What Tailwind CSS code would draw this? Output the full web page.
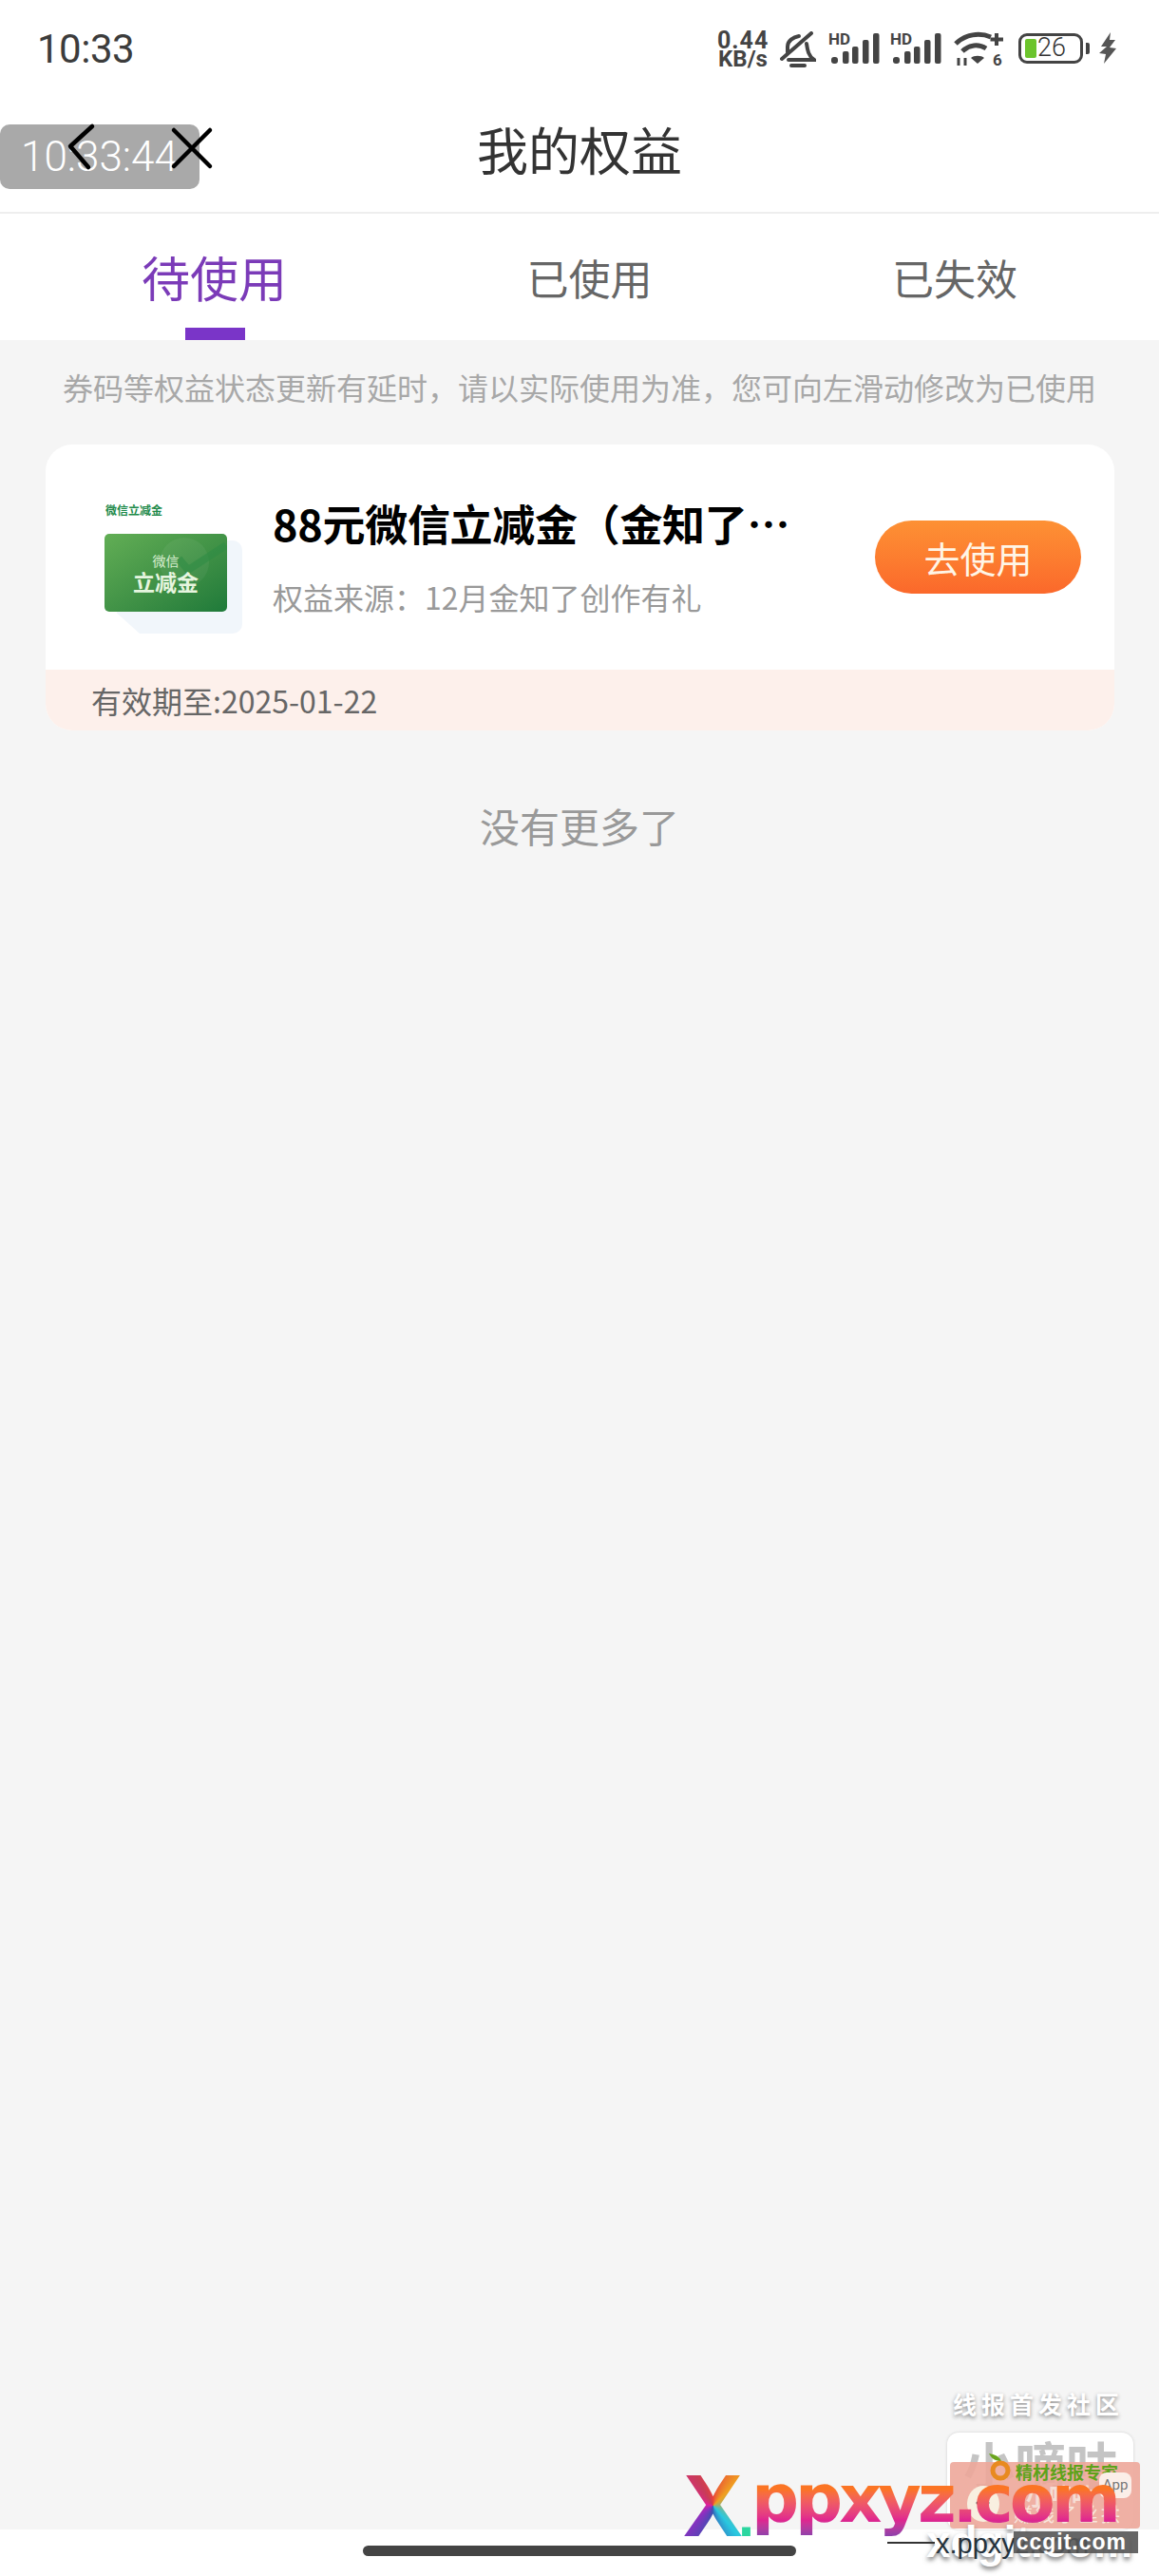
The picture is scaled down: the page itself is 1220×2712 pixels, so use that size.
<!DOCTYPE html>
<html lang="zh-CN">
<head>
  <meta charset="UTF-8" />
  <meta name="viewport" content="width=device-width, initial-scale=1" />
  <title>我的权益</title>
  <script src="https://cdn.jsdelivr.net/npm/@tailwindcss/browser@4"></script>
</head>
<body class="bg-[#f5f5f5] font-['Noto_Sans_CJK_SC','Noto_Sans',sans-serif]">
  <div class="relative w-[1220px] h-[2712px] overflow-hidden flex flex-col">

    <!-- status bar -->
    <div class="bg-white h-[105px] pt-[28px] pl-[39px] pr-[45px] flex items-start justify-between">
      <span class="font-['Roboto',sans-serif] text-[42px] leading-[48px] tracking-[-0.5px] text-[#3c3c3c]">10:33</span>
      <div class="flex items-start pt-[5px] text-[#444]">
        <div class="w-[54px] font-['Roboto',sans-serif] font-bold text-center">
          <div class="text-[25px] leading-[20px] tracking-[1px]">0.44</div>
          <div class="text-[24px] leading-[19px]">KB/s</div>
        </div>
        <svg class="ml-[12px]" width="38" height="40" viewBox="0 0 38 40" fill="none" stroke="currentColor" stroke-width="4" stroke-linecap="round"><path d="M2 29 L33 2" /><path d="M8 22 V16 C8 10 14 6 20 5" /><path d="M28 13 C29 20 30 26 36 30 H9" /><path d="M12 36 H26" stroke-width="4" /></svg>
        <svg class="ml-[13px] mt-[1px]" width="54" height="36" viewBox="0 0 54 36" fill="currentColor"><text x="0" y="13" font-family="Roboto" font-weight="700" font-size="17">HD</text><rect x="3" y="26" width="7" height="7" rx="3" /><rect x="15" y="20" width="6.5" height="13" rx="2" /><rect x="25" y="15" width="6.5" height="18" rx="2" /><rect x="36" y="8" width="6.5" height="25" rx="2" /><rect x="47" y="1" width="6.5" height="32" rx="2" /></svg>
        <svg class="ml-[11px] mt-[1px]" width="54" height="36" viewBox="0 0 54 36" fill="currentColor"><text x="0" y="13" font-family="Roboto" font-weight="700" font-size="17">HD</text><rect x="3" y="26" width="7" height="7" rx="3" /><rect x="15" y="20" width="6.5" height="13" rx="2" /><rect x="25" y="15" width="6.5" height="18" rx="2" /><rect x="36" y="8" width="6.5" height="25" rx="2" /><rect x="47" y="1" width="6.5" height="32" rx="2" /></svg>
        <svg class="ml-[13px]" width="54" height="38" viewBox="0 0 54 38" fill="none" stroke="currentColor" stroke-width="5"><path d="M2 13 C12 3 27 1 39 6" /><path d="M9 21 C16 14 26 13 34 18" /><path d="M25 34 L18 28 C21 25 29 25 32 28 Z" fill="currentColor" stroke="none" /><path d="M45 2 V15 M38.500 8.500 H52" stroke-width="4" /><text x="41" y="36" font-family="Roboto" font-weight="700" font-size="17" fill="currentColor" stroke="none">6</text><path d="M5 28 V36 M12 28 V36" stroke-width="3" /></svg>
        <div class="ml-[14px] mt-[1px] flex items-center">
          <div class="relative w-[68px] h-[32px] rounded-[9px] border-[3px] border-[#444] flex items-center overflow-hidden">
            <div class="absolute left-[4px] top-[3px] bottom-[3px] w-[12px] rounded-[2px] bg-[#6cc42c]"></div>
            <span class="relative ml-[17px] font-['Roboto',sans-serif] font-light text-[27px] leading-none text-[#333]">26</span>
          </div>
          <div class="ml-[3px] w-[4px] h-[12px] rounded-r-[2px] bg-[#444]"></div>
          <svg class="ml-[10px]" width="18" height="33" viewBox="0 0 18 33" fill="#555"><path d="M12 0 L2 15 L8 15 L0 22 L7 23 L5 33 L18 17 L11 16 L17 8 L11 8 Z" /></svg>
        </div>
      </div>
    </div>

    <!-- nav bar -->
    <div class="bg-white h-[120px] border-b-2 border-[#eeeeee] flex items-center justify-center pb-[14px]">
      <h1 class="text-[54px] leading-none text-[#333]">我的权益</h1>
    </div>

    <!-- tabs -->
    <div class="bg-white h-[133px] pl-[149px] pr-[149px] flex items-center justify-between">
      <div class="relative h-full flex items-center text-[51px] leading-none text-[#7b3bb8]">
        待使用
        <div class="absolute bottom-0 left-[46px] w-[63px] h-[13px] bg-[#7a35c8]"></div>
      </div>
      <div class="text-[44px] leading-none text-[#666]">已使用</div>
      <div class="text-[44px] leading-none text-[#666]">已失效</div>
    </div>

    <p class="mt-[29px] text-center text-[32px] leading-[40px] text-[#a8a8a8]">券码等权益状态更新有延时，请以实际使用为准，您可向左滑动修改为已使用</p>

    <!-- coupon card -->
    <div class="mt-[41px] ml-[48px] w-[1125px] rounded-[28px] overflow-hidden bg-white">
      <div class="h-[237px] flex items-center pl-[63px]">
        <div class="relative w-[144px] h-[138px] self-start mt-[61px] shrink-0">
          <div class="absolute left-[12px] top-[40px] w-[132px] h-[98px] rounded-[10px] bg-[#f1f6fb] [clip-path:polygon(0_0,100%_0,100%_100%,24px_100%,0_78%)]"></div>
          <div class="absolute left-0 top-0 text-[12px] leading-[16px] font-bold text-[#1d8a4a] whitespace-nowrap">微信立减金</div>
          <div class="absolute -left-[1px] top-[33px] w-[129px] h-[82px] rounded-[5px] bg-gradient-to-br from-[#62ae55] to-[#1e7a3a] flex flex-col items-center justify-center overflow-hidden">
            <svg class="absolute left-0 top-0" width="129" height="82" viewBox="0 0 129 82" fill="none"><circle cx="84" cy="30" r="26" fill="#ffffff" fill-opacity="0.05" /><path d="M78 26 L88 38 L128 12" stroke="#2f8c45" stroke-opacity="0.6" stroke-width="8" /></svg>
            <span class="relative text-[14px] leading-[18px] text-[#d8eed0]">微信</span>
            <span class="relative text-[23px] leading-[26px] font-bold text-[#e6f5df]">立减金</span>
          </div>
        </div>
        <div class="ml-[32px] w-[600px] -mt-[4px]">
          <h2 class="text-[45px] leading-[60px] tracking-[-0.3px] font-bold text-black whitespace-nowrap">88元微信立减金（金知了…</h2>
          <p class="mt-[27px] text-[32px] leading-[40px] text-[#999] whitespace-nowrap">权益来源：12月金知了创作有礼</p>
        </div>
        <button class="ml-auto mr-[35px] w-[217px] h-[77px] rounded-full bg-gradient-to-b from-[#fd9134] to-[#fb682b] text-[38px] leading-none text-[#fff5e6]">去使用</button>
      </div>
      <div class="h-[64px] bg-[#fdf0eb] pl-[48px] flex items-center text-[32px] text-[#666]">有效期至:2025-01-22</div>
    </div>

    <p class="mt-[73px] text-center text-[42px] leading-[54px] text-[#999]">没有更多了</p>

    <!-- home indicator -->
    <div class="mt-auto h-[49px] bg-white flex justify-center pt-[17px]">
      <div class="w-[456px] h-[11px] rounded-full bg-[#444]"></div>
    </div>

    <!-- screenshot timestamp toast -->
    <div class="absolute left-0 top-[131px] w-[210px] h-[68px] rounded-[10px] bg-[#a9a9a9] flex items-center pl-[22px] font-['Roboto',sans-serif] font-light text-[44px] text-white">10:33:44</div>
    <svg class="absolute left-[70px] top-[128px]" width="155" height="52" viewBox="70 128 155 52" fill="none" stroke="#000" stroke-width="4.5" stroke-linecap="round" stroke-linejoin="round">
      <path d="M97 133 L74 154 L93 176" />
      <path d="M183 137 L221 175 M221 137 L183 175" />
    </svg>

    <!-- watermark: community label and app card -->
    <div class="absolute left-[1003px] top-[2514px] text-[25px] leading-[32px] tracking-[5px] font-bold text-white whitespace-nowrap [text-shadow:0_2px_4px_#888]">线报首发社区</div>
    <div class="absolute left-[997px] top-[2561px] w-[196px] h-[102px] rounded-[12px] bg-white shadow-[0_0_3px_#ccc] text-center text-[54px] leading-[66px] font-bold text-[#c4c4c4]">小嘀咕</div>
    <div class="absolute left-[1000px] top-[2592px] w-[200px] h-[70px] rounded-[4px] bg-[#eda79a]/90">
      <div class="absolute left-[80px] top-[20px] text-[24px] leading-[30px] font-bold text-[#f6ddd4] whitespace-nowrap">小嘀咕</div>
      <svg class="absolute left-[40px] top-[-9px]" width="24" height="30" viewBox="0 0 24 30"><path d="M1 0 C4 6 8 8 14 8 C12 3 7 1 1 0 Z" fill="#6aa51e" /><circle cx="13" cy="18" r="8" fill="none" stroke="#e88a20" stroke-width="5" /></svg>
      <div class="absolute left-[69px] top-0 text-[18px] leading-[20px] font-bold text-[#5ea31a] whitespace-nowrap">精材线报专家</div>
      <div class="absolute left-[157px] top-[11px] w-[34px] h-[27px] rounded-[8px] bg-[#fbeee8] text-center text-[15px] leading-[27px] text-[#777] font-['Roboto',sans-serif]">App</div>
      <svg class="absolute left-[17px] top-[22px]" width="36" height="42" viewBox="0 0 36 42"><ellipse cx="18" cy="22" rx="17" ry="19" fill="#f8efe0" /><circle cx="12" cy="21" r="1.500" fill="#444" /><circle cx="23" cy="21" r="1.500" fill="#444" /></svg>
      <div class="absolute left-[67px] top-[42px] text-[20px] leading-[26px] tracking-[3px] text-[#f9e6de] whitespace-nowrap">赚钱了丝拱</div>
    </div>

    <!-- watermark: site name -->
    <div class="absolute left-[718px] top-[2594px] text-[88px] leading-[88px] font-['Inter',sans-serif] font-bold text-transparent bg-clip-text bg-[conic-gradient(#e8403c_0deg,#f0a020_45deg,#28c8e0_140deg,#3a50b0_185deg,#8a30c0_230deg,#e0209a_280deg,#c83c58_330deg,#e8403c_360deg)]">X</div>
    <div class="absolute left-[776px] top-[2628px] text-[50px] leading-[50px] font-['DejaVu_Sans',sans-serif] font-bold text-[#2bd6a0]">.</div>
    <div class="absolute left-[791px] top-[2581px] text-[70px] leading-[100px] tracking-[-4px] font-['DejaVu_Sans',sans-serif] font-bold whitespace-nowrap text-transparent bg-clip-text bg-gradient-to-b from-[#fb7424] from-40% via-[#e0258f] via-72% to-[#7e3fb0] to-92%">ppxyz.com</div>

    <!-- watermark: bottom credits -->
    <div class="absolute left-[975px] top-[2650px] text-[46px] leading-[52px] font-['Liberation_Sans',sans-serif] font-bold text-white whitespace-nowrap [text-shadow:0_3px_5px_#777]">xdgit.com</div>
    <div class="absolute left-[934px] top-[2676px] w-[50px] h-[2px] bg-[#333]"></div>
    <div class="absolute left-[985px] top-[2662px] text-[29px] leading-[32px] font-['Liberation_Sans',sans-serif] text-[#24323c] whitespace-nowrap">x.ppxyz.com</div>
    <div class="absolute left-[1067px] top-[2665px] w-[131px] h-[23px] bg-[#555]/90 text-right pr-[12px] text-[23px] leading-[23px] tracking-[1px] font-['Liberation_Sans',sans-serif] font-bold text-white whitespace-nowrap">ccgit.com</div>
  </div>
</body>
</html>
